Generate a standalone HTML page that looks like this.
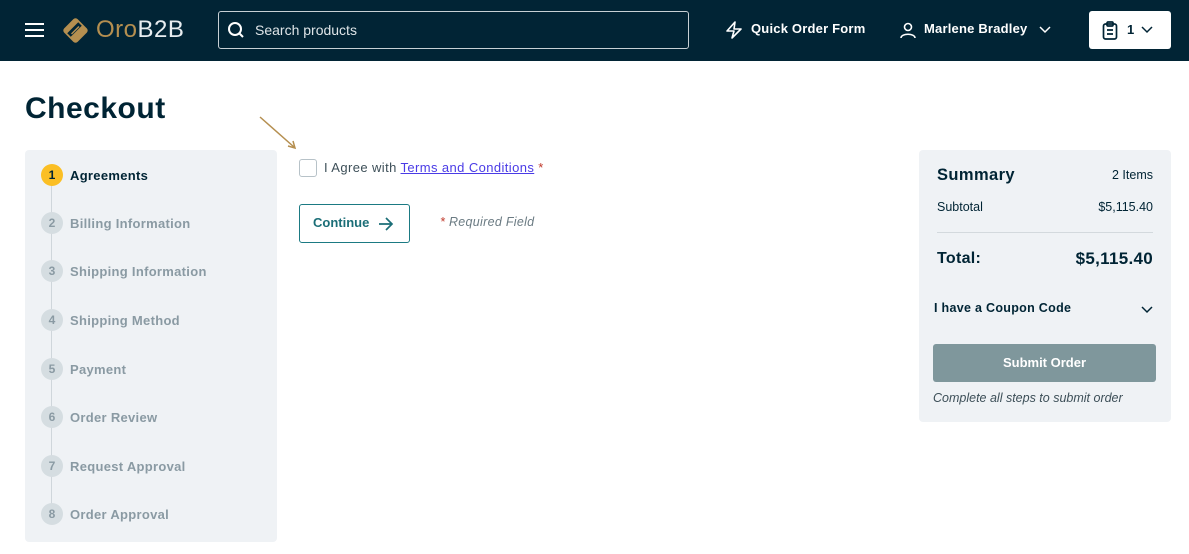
<!DOCTYPE html>
<html><head><meta charset="utf-8"><style>
*{box-sizing:border-box;margin:0;padding:0}
body{width:1189px;height:554px;overflow:hidden;background:#fff;font-family:"Liberation Sans",sans-serif;position:relative;color:#002434}
.hdr{position:absolute;left:0;top:0;width:1189px;height:61px;background:#012435}
.abs{position:absolute}
.side{position:absolute;left:25px;top:150px;width:252px;height:392px;background:#eff2f5;border-radius:4px}
.line{position:absolute;left:26px;top:25px;width:1px;height:340px;background:#cfd6db}
.step{position:absolute;left:16px;height:22px;display:flex;align-items:center;font-size:13px;font-weight:bold;color:#8a9aa3;letter-spacing:0.3px}
.num{width:22px;height:22px;border-radius:50%;background:#d5dde1;color:#8a9aa3;font-size:12px;display:flex;align-items:center;justify-content:center;margin-right:7px;letter-spacing:0}
.sum{position:absolute;left:919px;top:150px;width:252px;height:272px;background:#eff2f5;border-radius:4px}
</style></head><body>
<div class="hdr">
 <div class="abs" style="left:25px;top:23px;width:19px;height:2px;background:#fff;box-shadow:0 6px 0 #fff,0 12px 0 #fff"></div>
 <svg class="abs" style="left:60px;top:15px" width="31" height="31" viewBox="0 0 31 31"><rect x="6" y="6" width="19" height="19" rx="3" fill="#b58f50" transform="rotate(45 15.5 15.5)"/><path d="M9 20 L20 9" stroke="#012435" stroke-width="5"/><path d="M11.5 19 L19 11.5" stroke="#b58f50" stroke-width="1.5"/></svg>
 <div class="abs" style="left:96px;top:16px;font-size:24px;color:#b58f50;letter-spacing:0.5px">Oro<span style="color:#e8edf0">B2B</span></div>
 <div class="abs" style="left:218px;top:11px;width:471px;height:38px;border:1px solid #c7d0d5;border-radius:3px"></div>
 <svg class="abs" style="left:227px;top:21px" width="18" height="18" viewBox="0 0 18 18" fill="none" stroke="#fff" stroke-width="2"><circle cx="8" cy="8" r="6"/><path d="M12.5 12.5 L16 16"/></svg>
 <div class="abs" style="left:255px;top:22px;font-size:14px;color:#dfe5e8">Search products</div>
 <svg class="abs" style="left:725px;top:21px" width="18" height="18" viewBox="0 0 18 18" fill="none" stroke="#fff" stroke-width="1.6" stroke-linejoin="round"><path d="M10 1 L2 10 H9 L7 17 L16 8 H9 Z"/></svg>
 <div class="abs" style="left:751px;top:21px;font-size:13px;font-weight:bold;color:#fff;letter-spacing:0.2px">Quick Order Form</div>
 <svg class="abs" style="left:899px;top:21px" width="18" height="18" viewBox="0 0 18 18" fill="none" stroke="#fff" stroke-width="1.6"><circle cx="9" cy="6" r="3.5"/><path d="M2 17 C2 12 16 12 16 17"/></svg>
 <div class="abs" style="left:924px;top:21px;font-size:13px;font-weight:bold;color:#fff;letter-spacing:0.2px">Marlene Bradley</div>
 <svg class="abs" style="left:1039px;top:26px" width="12" height="8" viewBox="0 0 12 8" fill="none" stroke="#fff" stroke-width="1.5"><path d="M1 1 L6 6 L11 1"/></svg>
 <div class="abs" style="left:1089px;top:11px;width:82px;height:38px;background:#fff;border-radius:3px"></div>
 <svg class="abs" style="left:1102px;top:21px" width="16" height="19" viewBox="0 0 16 19" fill="none" stroke="#012435" stroke-width="1.7"><rect x="1.5" y="3" width="13" height="15" rx="2"/><rect x="5" y="1" width="6" height="4" rx="1"/><path d="M5 9 H11 M5 13 H11"/></svg>
 <div class="abs" style="left:1127px;top:22px;font-size:13px;font-weight:bold;color:#012435">1</div>
 <svg class="abs" style="left:1141px;top:26px" width="12" height="8" viewBox="0 0 12 8" fill="none" stroke="#012435" stroke-width="1.5"><path d="M1 1 L6 6 L11 1"/></svg>
</div>
<div class="abs" style="left:25px;top:92px;font-size:30px;font-weight:bold;color:#002434;letter-spacing:0.5px">Checkout</div>
<svg class="abs" style="left:258px;top:115px" width="40" height="36" viewBox="0 0 40 36"><path d="M2 2 L36 32" stroke="#b58f50" stroke-width="1.5"/><path d="M30 31 L37 33 L35 26" fill="none" stroke="#b58f50" stroke-width="1.5"/></svg>
<div class="side"><div class="line"></div>
 <div class="step" style="top:14px;color:#002434"><div class="num" style="background:#fbbf24;color:#002434">1</div>Agreements</div>
 <div class="step" style="top:62px"><div class="num">2</div>Billing Information</div>
 <div class="step" style="top:110px"><div class="num">3</div>Shipping Information</div>
 <div class="step" style="top:159px"><div class="num">4</div>Shipping Method</div>
 <div class="step" style="top:208px"><div class="num">5</div>Payment</div>
 <div class="step" style="top:256px"><div class="num">6</div>Order Review</div>
 <div class="step" style="top:305px"><div class="num">7</div>Request Approval</div>
 <div class="step" style="top:353px"><div class="num">8</div>Order Approval</div>
</div>
<div class="abs" style="left:299px;top:159px;width:18px;height:18px;border:1px solid #b7c2c8;border-radius:3px;background:#fff"></div>
<div class="abs" style="left:324px;top:160px;font-size:13px;color:#3d4f58;letter-spacing:0.4px">I Agree with <span style="color:#4a3be6;text-decoration:underline">Terms and Conditions</span> <span style="color:#c0392b">*</span></div>
<div class="abs" style="left:299px;top:204px;width:111px;height:39px;border:1px solid #1b7a83;border-radius:3px"></div>
<div class="abs" style="left:313px;top:215px;font-size:13px;font-weight:bold;color:#1b6e77">Continue</div>
<svg class="abs" style="left:378px;top:217px" width="16" height="14" viewBox="0 0 16 14" fill="none" stroke="#1b6e77" stroke-width="1.7"><path d="M1 7 H14 M8 1 L14 7 L8 13"/></svg>
<div class="abs" style="left:440px;top:215px;font-size:12.5px;font-style:italic;color:#6b7b83;letter-spacing:0.3px"><span style="color:#c0392b">*</span> Required Field</div>
<div class="sum">
 <div class="abs" style="left:18px;top:16px;font-size:16.5px;font-weight:bold;letter-spacing:0.4px">Summary</div>
 <div class="abs" style="right:18px;top:18px;font-size:12.5px">2 Items</div>
 <div class="abs" style="left:18px;top:50px;font-size:12.5px">Subtotal</div>
 <div class="abs" style="right:18px;top:50px;font-size:12.5px">$5,115.40</div>
 <div class="abs" style="left:18px;top:82px;width:216px;height:1px;background:#d3d9dd"></div>
 <div class="abs" style="left:18px;top:100px;font-size:16px;font-weight:bold;letter-spacing:0.3px">Total:</div>
 <div class="abs" style="right:18px;top:99px;font-size:17px;font-weight:bold;letter-spacing:0.3px">$5,115.40</div>
 <div class="abs" style="left:15px;top:151px;font-size:12.5px;font-weight:bold;letter-spacing:0.3px">I have a Coupon Code</div>
 <svg class="abs" style="left:222px;top:156px" width="12" height="8" viewBox="0 0 12 8" fill="none" stroke="#002434" stroke-width="1.5"><path d="M1 1 L6 6 L11 1"/></svg>
 <div class="abs" style="left:14px;top:194px;width:223px;height:38px;background:#7f979c;border-radius:3px;color:#fff;font-size:13px;font-weight:bold;text-align:center;line-height:38px">Submit Order</div>
 <div class="abs" style="left:14px;top:241px;font-size:12.5px;font-style:italic;color:#3d4f58">Complete all steps to submit order</div>
</div>
</body></html>
